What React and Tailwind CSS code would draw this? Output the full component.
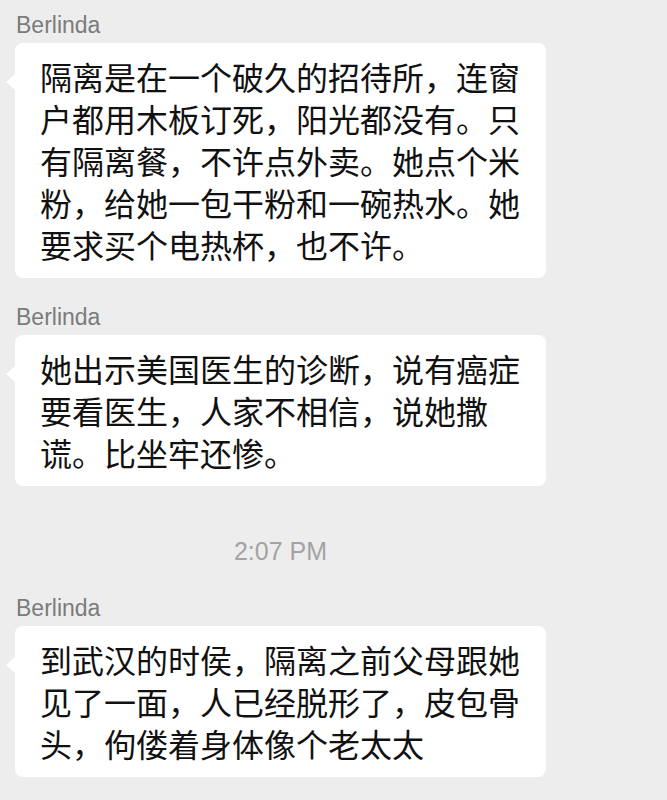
import React from "react";

const messages = [
  {
    type: "msg",
    name: "Berlinda",
    lines: [
      "隔离是在一个破久的招待所，连窗",
      "户都用木板订死，阳光都没有。只",
      "有隔离餐，不许点外卖。她点个米",
      "粉，给她一包干粉和一碗热水。她",
      "要求买个电热杯，也不许。",
    ],
  },
  {
    type: "msg",
    name: "Berlinda",
    lines: [
      "她出示美国医生的诊断，说有癌症",
      "要看医生，人家不相信，说她撒",
      "谎。比坐牢还惨。",
    ],
  },
  { type: "time", text: "2:07 PM" },
  {
    type: "msg",
    name: "Berlinda",
    lines: [
      "到武汉的时侯，隔离之前父母跟她",
      "见了一面，人已经脱形了，皮包骨",
      "头，佝偻着身体像个老太太",
    ],
  },
];

const Bubble = ({ name, lines }) => (
  <div className="flex flex-col">
    <div
      className="pl-4 text-[23px] leading-[26px] text-[#7b7b7b]"
      style={{ fontFamily: '"Liberation Sans", Arial, sans-serif' }}
    >
      {name}
    </div>
    <div className="relative mt-[5px] ml-[15px] w-[531px] rounded-lg bg-white px-[25px] pt-[12px] pb-[13px]">
      {/* tail */}
      <div className="absolute left-[-9px] top-[31px] h-0 w-0 border-y-[8px] border-r-[9px] border-y-transparent border-r-white" />
      <div
        className="text-[32px] leading-[42px] text-[#111111]"
        style={{ fontFamily: '"Noto Sans CJK SC", "Noto Sans", sans-serif' }}
      >
        {lines.map((line, i) => (
          <div key={i} className="whitespace-nowrap">
            {line}
          </div>
        ))}
      </div>
    </div>
  </div>
);

export default function App() {
  return (
    <div className="min-h-screen w-full bg-[#ededed] pt-[12px] pb-6">
      <div className="flex flex-col">
        <Bubble {...messages[0]} />
        <div className="mt-[26px]">
          <Bubble {...messages[1]} />
        </div>
        <div
          className="mt-[50px] w-[561px] text-center text-[25px] leading-[30px] text-[#a3a3a3]"
          style={{ fontFamily: '"Liberation Sans", Arial, sans-serif' }}
        >
          {messages[2].text}
        </div>
        <div className="mt-[29px]">
          <Bubble {...messages[3]} />
        </div>
      </div>
    </div>
  );
}
